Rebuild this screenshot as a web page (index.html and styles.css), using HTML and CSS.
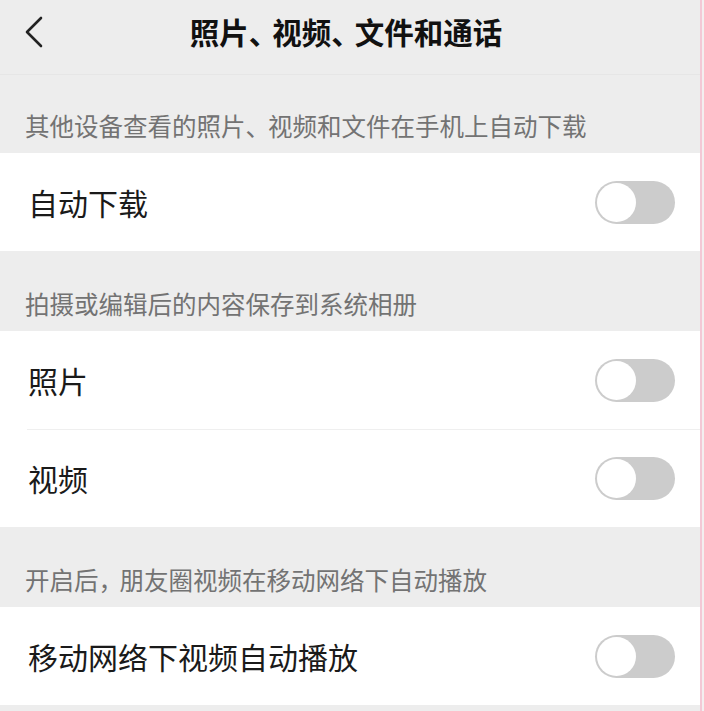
FILE: index.html
```html
<!DOCTYPE html>
<html lang="zh-CN">
<head>
<meta charset="utf-8">
<title>照片、视频、文件和通话</title>
<link rel="stylesheet" href="styles.css">
</head>
<body>
<div class="page">
  <header class="nav">
    <span class="back">
      <svg width="20" height="32" viewBox="0 0 20 32"><path d="M17 2 L3 16 L17 30" fill="none" stroke="#222" stroke-width="2.6" stroke-linecap="round" stroke-linejoin="round"/></svg>
    </span>
    <h1 class="title">照片<span class="pt">、</span>视频<span class="pt">、</span>文件和通话</h1>
  </header>

  <div class="label">其他设备查看的照片<span class="pl">、</span>视频和文件在手机上自动下载</div>
  <div class="group">
    <div class="row"><span class="text">自动下载</span><span class="switch"><span class="knob"></span></span></div>
  </div>

  <div class="label">拍摄或编辑后的内容保存到系统相册</div>
  <div class="group">
    <div class="row"><span class="text">照片</span><span class="switch"><span class="knob"></span></span></div>
    <div class="row divided"><span class="text">视频</span><span class="switch"><span class="knob"></span></span></div>
  </div>

  <div class="label">开启后<span class="pc">，</span>朋友圈视频在移动网络下自动播放</div>
  <div class="group">
    <div class="row"><span class="text">移动网络下视频自动播放</span><span class="switch"><span class="knob"></span></span></div>
  </div>
</div>
</body>
</html>
```

FILE: styles.css
```css
* { box-sizing: border-box; }
html, body { margin: 0; padding: 0; }
body {
  background: #f3eff0;
  font-family: "Noto Sans CJK SC", "Noto Sans", sans-serif;
  height: 711px;
  overflow: hidden;
}
.page {
  width: 702px;
  height: 711px;
  background: #ededed;
  border-right: 2px solid #f3c9d6;
}
.nav {
  height: 75px;
  display: flex;
  align-items: center;
  position: relative;
  border-bottom: 1px solid #e6e6e6;
}
.back {
  position: absolute;
  left: 24px;
  top: 16px;
  width: 20px;
  height: 32px;
}
.back svg { display: block; }
.title {
  margin: 0;
  width: 100%;
  text-align: center;
  font-size: 29.5px;
  font-weight: 700;
  color: #111;
  line-height: 36px;
  margin-top: -12px;
  padding-right: 8px;
}
.pt { letter-spacing: -6px; }
.pl { letter-spacing: -2px; }
.pc { letter-spacing: -3.5px; }
.label {
  height: 78px;
  display: flex;
  align-items: flex-end;
  padding: 0 0 14px 25px;
  font-size: 24.5px;
  line-height: 26px;
  color: #737373;
}
.group + .label { height: 80px; }
.group {
  background: #fff;
}
.row {
  height: 98px;
  display: flex;
  align-items: center;
  justify-content: space-between;
  padding: 0 25px 0 28px;
  position: relative;
}
.row.divided::before {
  content: "";
  position: absolute;
  left: 27px;
  right: 0;
  top: 0;
  border-top: 1px solid #efefef;
}
.text {
  font-size: 30px;
  color: #1a1a1a;
  line-height: 34px;
  margin-top: 0;
}
.switch {
  width: 80px;
  height: 43px;
  border-radius: 22px;
  background: #cccccc;
  display: flex;
  align-items: center;
  padding-left: 2px;
}
.knob {
  width: 39px;
  height: 39px;
  border-radius: 50%;
  background: #fff;
}
```
